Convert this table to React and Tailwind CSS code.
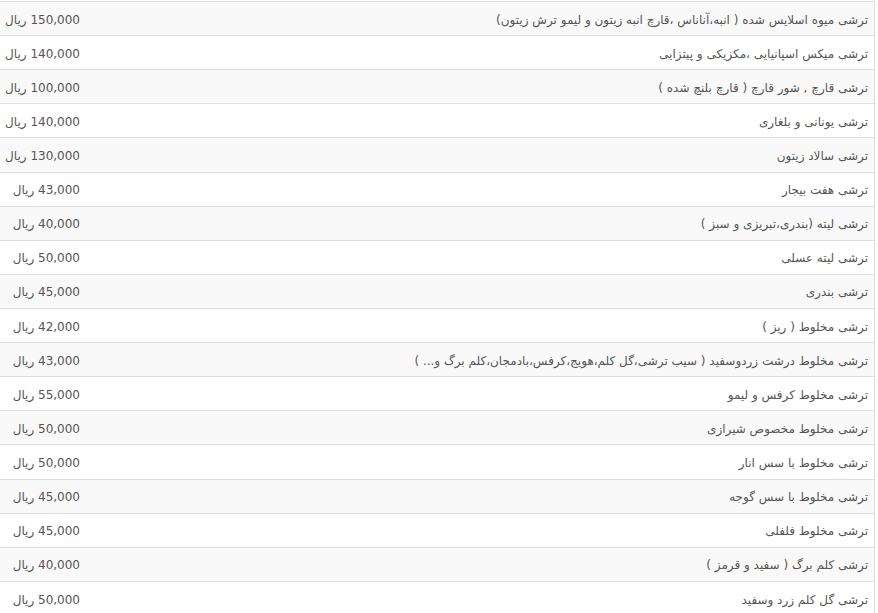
import React from 'react'

const items = [
    { name: 'ترشی میوه اسلایس شده ( انبه،آناناس ،قارچ انبه زیتون و لیمو ترش زیتون)', price: '150,000' },
    { name: 'ترشی میکس اسپانیایی ،مکزیکی و پیتزایی', price: '140,000' },
    { name: 'ترشی قارچ , شور قارچ ( قارچ بلنچ شده )', price: '100,000' },
    { name: 'ترشی یونانی و بلغاری', price: '140,000' },
    { name: 'ترشی سالاد زیتون', price: '130,000' },
    { name: 'ترشی هفت بیجار', price: '43,000' },
    { name: 'ترشی لیته (بندری،تبریزی و سبز )', price: '40,000' },
    { name: 'ترشی لیته عسلی', price: '50,000' },
    { name: 'ترشی بندری', price: '45,000' },
    { name: 'ترشی مخلوط ( ریز )', price: '42,000' },
    { name: 'ترشی مخلوط درشت زردوسفید ( سیب ترشی،گل کلم،هویج،کرفس،بادمجان،کلم برگ و... )', price: '43,000' },
    { name: 'ترشی مخلوط کرفس و لیمو', price: '55,000' },
    { name: 'ترشی مخلوط مخصوص شیرازی', price: '50,000' },
    { name: 'ترشی مخلوط با سس انار', price: '50,000' },
    { name: 'ترشی مخلوط با سس گوجه', price: '45,000' },
    { name: 'ترشی مخلوط فلفلی', price: '45,000' },
    { name: 'ترشی کلم برگ ( سفید و قرمز )', price: '40,000' },
    { name: 'ترشی گل کلم زرد وسفید', price: '50,000' },
]

const App = () => {
    return (
        <div className="w-[878px] h-[613px] overflow-hidden bg-white pt-px">
            <table dir="rtl" className="w-[875px] border-collapse text-[12px] text-[#555] font-['DejaVu_Sans',sans-serif]">
                <tbody>
                    {items.map((item, idx) => (
                        <tr key={idx} className={`border-t border-[#ddd] h-[34.12px] ${idx % 2 === 0 ? 'bg-[#f9f9f9]' : 'bg-white'}`}>
                            <td className="border-r border-[#ddd] pr-[6px] pt-[2px] text-right align-middle">{item.name}</td>
                            <td className="w-[100px] pl-0 pr-[20px] pt-[2px] text-right align-middle whitespace-nowrap">{item.price} ریال</td>
                        </tr>
                    ))}
                </tbody>
            </table>
        </div>
    )
}

export default App
